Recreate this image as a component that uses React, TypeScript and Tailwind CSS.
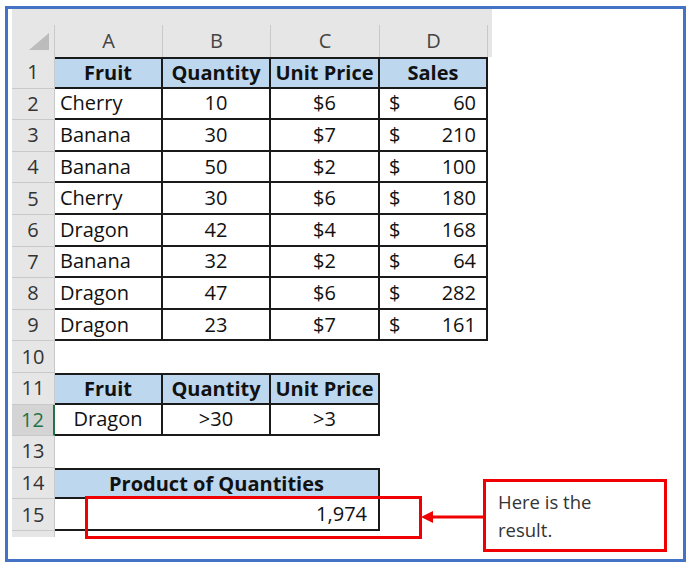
import React from "react";

type Row = { fruit: string; qty: number; price: string; sales: number };

const data: Row[] = [
  { fruit: "Cherry", qty: 10, price: "$6", sales: 60 },
  { fruit: "Banana", qty: 30, price: "$7", sales: 210 },
  { fruit: "Banana", qty: 50, price: "$2", sales: 100 },
  { fruit: "Cherry", qty: 30, price: "$6", sales: 180 },
  { fruit: "Dragon", qty: 42, price: "$4", sales: 168 },
  { fruit: "Banana", qty: 32, price: "$2", sales: 64 },
  { fruit: "Dragon", qty: 47, price: "$6", sales: 282 },
  { fruit: "Dragon", qty: 23, price: "$7", sales: 161 },
];

// border helpers for the black cell borders
const line = "border-[#1a1a1a]";
const hdr = "bg-[#bdd7ee] font-bold justify-center";

// grey row number on the left
const RowHead = ({ n, active }: { n: number; active?: boolean }) => (
  <div
    className={
      active
        ? "w-[43px] shrink-0 flex items-center justify-center bg-[#d4d4d4] text-[#217346] border-b border-[#c9c9c9] border-r-2 border-r-[#217346]"
        : "w-[43px] shrink-0 flex items-center justify-center bg-[#e6e6e6] text-[#333] border-b border-r border-[#c9c9c9]"
    }
  >
    {n}
  </div>
);

const Cell = ({ w, className = "", children }: { w: string; className?: string; children?: React.ReactNode }) => (
  <div className={`${w} shrink-0 flex items-center ${className}`}>{children}</div>
);

const GridRow = ({ n, active, children }: { n: number; active?: boolean; children?: React.ReactNode }) => (
  <div className="flex h-[31.6px]">
    <RowHead n={n} active={active} />
    {children}
  </div>
);

export default function App() {
  return (
    <div
      className="w-[693px] h-[570px] bg-white pt-[6px] pl-[5px] text-[20px] text-[#111]"
      style={{ fontFamily: '"Open Sans", "Liberation Sans", sans-serif' }}
    >
      <div className="relative w-[681px] h-[556px] border-[3px] border-[#4472c4] pl-[4px]">
        {/* column headers */}
        <div className="w-[480px] bg-[#e6e6e6]">
          <div className="h-[16px]" />
          <div className="flex h-[32px] text-[#444]">
            <div className="w-[43px] shrink-0 border-r border-[#c9c9c9] flex items-end justify-end pr-[5px] pb-[7px]">
              <svg width="20" height="17" viewBox="0 0 20 17">
                <polygon points="20,0 20,17 0,17" fill="#bcbcbc" />
              </svg>
            </div>
            <div className="w-[108px] shrink-0 flex items-center justify-center border-r border-[#c9c9c9]">A</div>
            <div className="w-[108px] shrink-0 flex items-center justify-center border-r border-[#c9c9c9]">B</div>
            <div className="w-[109px] shrink-0 flex items-center justify-center border-r border-[#c9c9c9]">C</div>
            <div className="w-[108px] shrink-0 flex items-center justify-center border-r border-[#c9c9c9]">D</div>
          </div>
        </div>

        {/* main table */}
        <GridRow n={1}>
          <Cell w="w-[108px]" className={`${hdr} border-t-2 border-b-2 border-r-2 ${line}`}>Fruit</Cell>
          <Cell w="w-[108px]" className={`${hdr} border-t-2 border-b-2 border-r-2 ${line}`}>Quantity</Cell>
          <Cell w="w-[109px]" className={`${hdr} border-t-2 border-b-2 border-r-2 ${line}`}>Unit Price</Cell>
          <Cell w="w-[108px]" className={`${hdr} border-t-2 border-b-2 border-r-2 ${line}`}>Sales</Cell>
        </GridRow>
        {data.map((r, i) => (
          <GridRow key={i} n={i + 2}>
            <Cell w="w-[108px]" className={`pl-[5px] border-b-2 border-r-2 ${line}`}>{r.fruit}</Cell>
            <Cell w="w-[108px]" className={`justify-center border-b-2 border-r-2 ${line}`}>{r.qty}</Cell>
            <Cell w="w-[109px]" className={`justify-center border-b-2 border-r-2 ${line}`}>{r.price}</Cell>
            <Cell w="w-[108px]" className={`justify-between pl-[9px] pr-[10px] border-b-2 border-r-2 ${line}`}>
              <span>$</span>
              <span>{r.sales}</span>
            </Cell>
          </GridRow>
        ))}
        <GridRow n={10} />

        {/* criteria table */}
        <GridRow n={11}>
          <Cell w="w-[108px]" className={`${hdr} border-t-2 border-b-2 border-r-2 ${line}`}>Fruit</Cell>
          <Cell w="w-[108px]" className={`${hdr} border-t-2 border-b-2 border-r-2 ${line}`}>Quantity</Cell>
          <Cell w="w-[109px]" className={`${hdr} border-t-2 border-b-2 border-r-2 ${line}`}>Unit Price</Cell>
        </GridRow>
        <GridRow n={12} active>
          <Cell w="w-[108px]" className={`justify-center border-b-2 border-r-2 ${line}`}>Dragon</Cell>
          <Cell w="w-[108px]" className={`justify-center border-b-2 border-r-2 ${line}`}>&gt;30</Cell>
          <Cell w="w-[109px]" className={`justify-center border-b-2 border-r-2 ${line}`}>&gt;3</Cell>
        </GridRow>
        <GridRow n={13} />

        {/* result */}
        <GridRow n={14}>
          <Cell w="w-[325px]" className={`${hdr} border-t-2 border-b-2 border-r-2 ${line}`}>Product of Quantities</Cell>
        </GridRow>
        <GridRow n={15}>
          <Cell w="w-[325px]" className={`justify-end pr-[11px] border-b-2 border-r-2 ${line}`}>1,974</Cell>
        </GridRow>
        <div className="w-[43px] h-[6px] bg-[#e6e6e6] border-r border-[#c9c9c9]" />

        {/* annotations */}
        <div className="absolute left-[77px] top-[487px] w-[337px] h-[43px] border-[3px] border-[#f00000]" />
        <svg className="absolute left-[413px] top-[500px]" width="64" height="16" viewBox="0 0 64 16">
          <polygon points="0,8 12,2 12,14" fill="#f00000" />
          <line x1="11" y1="8" x2="64" y2="8" stroke="#f00000" strokeWidth="3" />
        </svg>
        <div className="absolute left-[475px] top-[470px] w-[184px] h-[73px] border-[3px] border-[#f00000] bg-white pl-[12px] pt-[6px] text-[18.5px] leading-[28px] text-[#333]">
          Here is the
          <br />
          result.
        </div>
      </div>
    </div>
  );
}
